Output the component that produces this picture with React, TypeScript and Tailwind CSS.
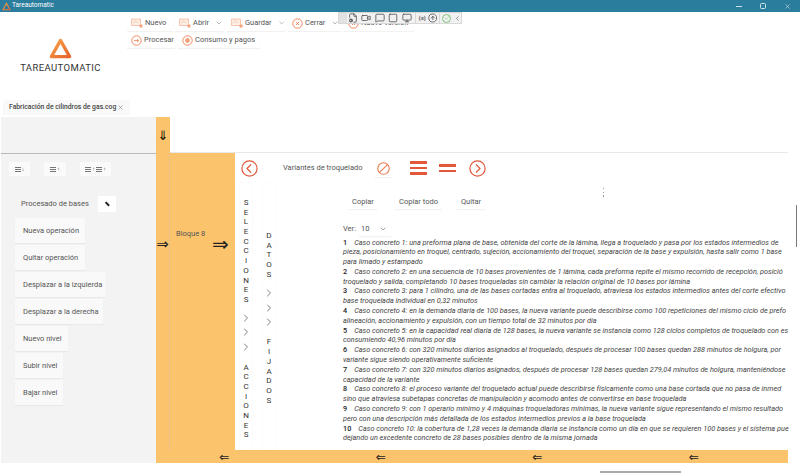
import { ChevronDown, ChevronRight, X, Check, FileCog, Video, MessageSquare, Square, Monitor, CircleArrowUp } from "lucide-react";

const cases: [string, string[]][] = [
  ["1", [
    "Caso concreto 1: una preforma plana de base, obtenida del corte de la lámina, llega a troquelado y pasa por los estados intermedios de",
    "pieza, posicionamiento en troquel, centrado, sujeción, accionamiento del troquel, separación de la base y expulsión, hasta salir como 1 base",
    "para limado y estampado",
  ]],
  ["2", [
    "Caso concreto 2: en una secuencia de 10 bases provenientes de 1 lámina, cada preforma repite el mismo recorrido de recepción, posició",
    "troquelado y salida, completando 10 bases troqueladas sin cambiar la relación original de 10 bases por lámina",
  ]],
  ["3", [
    "Caso concreto 3: para 1 cilindro, una de las bases cortadas entra al troquelado, atraviesa los estados intermedios antes del corte efectivo",
    "base troquelada individual en 0,32 minutos",
  ]],
  ["4", [
    "Caso concreto 4: en la demanda diaria de 100 bases, la nueva variante puede describirse como 100 repeticiones del mismo ciclo de prefo",
    "alineación, accionamiento y expulsión, con un tiempo total de 32 minutos por día",
  ]],
  ["5", [
    "Caso concreto 5: en la capacidad real diaria de 128 bases, la nueva variante se instancia como 128 ciclos completos de troquelado con es",
    "consumiendo 40,96 minutos por día",
  ]],
  ["6", [
    "Caso concreto 6: con 320 minutos diarios asignados al troquelado, después de procesar 100 bases quedan 288 minutos de holgura, por",
    "variante sigue siendo operativamente suficiente",
  ]],
  ["7", [
    "Caso concreto 7: con 320 minutos diarios asignados, después de procesar 128 bases quedan 279,04 minutos de holgura, manteniéndose",
    "capacidad de la variante",
  ]],
  ["8", [
    "Caso concreto 8: el proceso variante del troquelado actual puede describirse físicamente como una base cortada que no pasa de inmed",
    "sino que atraviesa subetapas concretas de manipulación y acomodo antes de convertirse en base troquelada",
  ]],
  ["9", [
    "Caso concreto 9: con 1 operario mínimo y 4 máquinas troqueladoras mínimas, la nueva variante sigue representando el mismo resultado",
    "pero con una descripción más detallada de los estados intermedios previos a la base troquelada",
  ]],
  ["10", [
    "Caso concreto 10: la cobertura de 1,28 veces la demanda diaria se instancia como un día en que se requieren 100 bases y el sistema pue",
    "dejando un excedente concreto de 28 bases posibles dentro de la misma jornada",
  ]],
];

function Logo({ size, stroke }: { size: number; stroke: number }) {
  return (
    <svg width={size} height={size} viewBox="0 0 24 24" fill="none">
      <defs>
        <linearGradient id="logoGrad" x1="0" y1="0" x2="1" y2="1">
          <stop offset="0" stopColor="#f7a348" />
          <stop offset="1" stopColor="#e8642c" />
        </linearGradient>
      </defs>
      <path d="M12 3.5 L21.5 20.5 L2.5 20.5 Z" stroke="url(#logoGrad)" strokeWidth={stroke} strokeLinejoin="round" />
    </svg>
  );
}

function FileIcon() {
  return (
    <svg width="12" height="10" viewBox="0 0 12 10" fill="none" className="shrink-0">
      <path d="M0.5 1h9v6.5h-9z" fill="#fdeee5" stroke="#f6b89c" strokeWidth="0.8" />
      <path d="M2 5l2.4-2 2.4 2" stroke="#f6b89c" strokeWidth="0.7" />
      <circle cx="10" cy="8" r="1.7" fill="#f5a482" />
    </svg>
  );
}

function RingIcon({ glyph }: { glyph: "close" | "go" | "coin" }) {
  return (
    <svg width="11" height="11" viewBox="0 0 11 11" fill="none" className="shrink-0">
      <circle cx="5.5" cy="5.5" r="4.7" stroke="#ee7d50" strokeWidth="0.9" />
      {glyph === "close" && <path d="M3.9 3.9l3.2 3.2M7.1 3.9L3.9 7.1" stroke="#ee7d50" strokeWidth="0.9" />}
      {glyph === "go" && <path d="M3 5.5h4.6M5.9 3.9l1.7 1.6-1.7 1.6" stroke="#ee7d50" strokeWidth="0.8" />}
      {glyph === "coin" && <circle cx="5.5" cy="5.5" r="2.4" fill="#f4a27e" />}
    </svg>
  );
}

function RibbonButton({ icon, label, caret, width }: { icon: React.ReactNode; label: string; caret?: boolean; width: string }) {
  return (
    <div className={`${width} h-[16px] flex items-center gap-[2px] pl-1 bg-white shadow-[0_1px_1px_rgba(0,0,0,0.05)] shrink-0`}>
      {icon}
      <span className="text-[7.5px] text-[#555] whitespace-nowrap">{label}</span>
      {caret && <ChevronDown size={8} strokeWidth={1.6} className="ml-[4px] text-[#777]" />}
    </div>
  );
}

function SideButton({ label, width }: { label: string; width: string }) {
  return (
    <div className={`${width} h-[25px] flex items-center pl-2 bg-[#f9f9f9] shadow-[0_1px_1px_rgba(0,0,0,0.04)] text-[7.5px] text-[#555] whitespace-nowrap`}>
      {label}
    </div>
  );
}

function SortIcon({ arrow, double }: { arrow: string; double?: boolean }) {
  const Lines = () => (
    <span className="flex flex-col gap-[1.2px] w-[6px]">
      <span className="h-[0.8px] bg-[#777]" />
      <span className="h-[0.8px] bg-[#777]" />
      <span className="h-[0.8px] bg-[#777]" />
    </span>
  );
  return (
    <span className="flex items-center gap-[1px] text-[6px] text-[#666] leading-none">
      <Lines />
      {double ? <span>↑</span> : null}
      {double ? <Lines /> : null}
      <span>{arrow}</span>
    </span>
  );
}

function VerticalWord({ word }: { word: string }) {
  return (
    <div className="flex flex-col items-center">
      {word.split("").map((c, i) => (
        <span key={i} className="h-[9.7px] leading-[9.7px] text-[8px] text-[#333]">{c}</span>
      ))}
    </div>
  );
}

function Chevrons({ gap }: { gap: string }) {
  return (
    <div className={`flex flex-col items-center ${gap}`}>
      <ChevronRight size={12} strokeWidth={1.5} className="text-[#555]" />
      <ChevronRight size={12} strokeWidth={1.5} className="text-[#555]" />
      <ChevronRight size={12} strokeWidth={1.5} className="text-[#555]" />
    </div>
  );
}

function CircleNav({ dir }: { dir: "left" | "right" }) {
  return (
    <svg width="17" height="17" viewBox="0 0 17 17" fill="none" className="shrink-0">
      <circle cx="8.5" cy="8.5" r="7.6" stroke="#e2583a" strokeWidth="1.2" />
      <path d={dir === "left" ? "M10 4.5L6 8.5l4 4" : "M7 4.5l4 4-4 4"} stroke="#e2583a" strokeWidth="1.2" />
    </svg>
  );
}

function FloatingTools() {
  return (
    <div className="absolute left-[338px] top-[12px] w-[124px] h-[12px] flex items-center bg-[#f1f1f1] border border-[#d8d8d8] text-[#444]">
      <span className="w-[8px] h-full bg-[#e2e2e2]" />
      <div className="flex items-center gap-[3.5px] pl-[1px]">
        <FileCog size={10} strokeWidth={1.8} />
        <Video size={10} strokeWidth={1.8} />
        <MessageSquare size={10} strokeWidth={1.8} />
        <Square size={10} strokeWidth={1.8} />
        <Monitor size={10} strokeWidth={1.8} />
      </div>
      <span className="ml-[3px] w-px h-full bg-[#d8d8d8]" />
      <span className="ml-[3px] text-[5.5px] font-bold">(≡)</span>
      <CircleArrowUp size={10} strokeWidth={1.8} className="ml-[2px]" />
      <span className="ml-[2px] w-px h-full bg-[#d8d8d8]" />
      <span className="ml-[2px] flex items-center justify-center w-[9px] h-[9px] rounded-full border border-[#7cc47c] text-[#5cb85c]">
        <Check size={6} strokeWidth={2} />
      </span>
      <ChevronRight size={7} strokeWidth={2} className="ml-[3px] rotate-180" />
    </div>
  );
}

export default function App() {
  return (
    <div className="relative w-[800px] h-[475px] overflow-hidden bg-white flex flex-col [font-family:Roboto,sans-serif]">
      <div className="h-[12px] flex items-center bg-[#2b7d9e] pl-[2px] shrink-0">
        <Logo size={9} stroke={3} />
        <span className="ml-[1px] text-[6.5px] text-white">Tareautomatic</span>
        <div className="ml-auto flex items-center gap-[18px] pr-[9px] text-white">
          <span className="w-[6px] h-[1px] bg-[#cfe3ea]" />
          <span className="w-[6px] h-[6px] rounded-[1.5px] border border-[#cfe3ea]" />
          <X size={7} strokeWidth={1.6} />
        </div>
      </div>

      <div className="h-[88px] flex shrink-0">
        <div className="w-[127px] flex flex-col items-center pt-[25px] shrink-0">
          <div className="-ml-[6px] flex flex-col items-center">
            <Logo size={23} stroke={3.4} />
            <span className="mt-[1px] text-[9.5px] tracking-[0.4px] text-[#333] whitespace-nowrap">TAREAUTOMATIC</span>
          </div>
        </div>
        <div className="flex flex-col gap-px pt-[3px]">
          <div className="flex gap-[3px]">
            <RibbonButton width="w-[45px]" icon={<FileIcon />} label="Nuevo" />
            <RibbonButton width="w-[49px]" icon={<FileIcon />} label="Abrir" caret />
            <RibbonButton width="w-[58px]" icon={<FileIcon />} label="Guardar" caret />
            <RibbonButton width="w-[53px]" icon={<RingIcon glyph="close" />} label="Cerrar" caret />
            <RibbonButton width="w-[70px]" icon={<RingIcon glyph="close" />} label="Nuevo versión" />
          </div>
          <div className="flex gap-[3px]">
            <RibbonButton width="w-[48px]" icon={<RingIcon glyph="go" />} label="Procesar" />
            <RibbonButton width="w-[82px]" icon={<RingIcon glyph="coin" />} label="Consumo y pagos" />
          </div>
        </div>
      </div>

      <div className="h-[17px] flex items-start pl-[3px] shrink-0">
        <div className="w-[127px] h-[15px] flex items-center pl-[6px] bg-[#f9f9f9] rounded-t-sm">
          <span className="text-[6.8px] font-medium text-[#444] whitespace-nowrap">Fabricación de cilindros de gas.cog</span>
          <X size={7} strokeWidth={1.6} className="ml-auto mr-[6px] text-[#666]" />
        </div>
      </div>

      <div className="h-[346px] flex shrink-0">
        <div className="w-[156px] flex flex-col bg-[#f3f3f3] shrink-0 ml-px">
          <div className="h-[37px] border-b border-[#b9b9b9] shrink-0" />
          <div className="flex gap-[14px] pl-[8px] pt-[8px]">
            <div className="w-[21px] h-[14px] flex items-center justify-center bg-[#fafafa]"><SortIcon arrow="↓" /></div>
            <div className="w-[22px] h-[14px] flex items-center justify-center bg-[#fafafa]"><SortIcon arrow="↑" /></div>
            <div className="w-[31px] h-[14px] flex items-center justify-center bg-[#fafafa]"><SortIcon arrow="↑" double /></div>
          </div>
          <div className="flex items-center mt-[20px] pl-[20px]">
            <span className="w-[77px] text-[7.5px] text-[#555] whitespace-nowrap">Procesado de bases</span>
            <div className="w-[18px] h-[16px] flex items-center justify-center bg-white">
              <span className="w-[5px] h-[1.5px] bg-[#222] rotate-45" />
            </div>
          </div>
          <div className="flex flex-col gap-[2px] pl-[14px] pt-[6px]">
            <SideButton width="w-[70px]" label="Nueva operación" />
            <SideButton width="w-[70px]" label="Quitar operación" />
            <SideButton width="w-[91px]" label="Desplazar a la izquierda" />
            <SideButton width="w-[88px]" label="Desplazar a la derecha" />
            <SideButton width="w-[53px]" label="Nuevo nivel" />
            <SideButton width="w-[48px]" label="Subir nivel" />
            <SideButton width="w-[48px]" label="Bajar nivel" />
          </div>
        </div>

        <div className="w-[632px] flex flex-col shrink-0 -ml-px">
          <div className="h-[36px] flex shrink-0">
            <div className="w-[14px] bg-[#fcc36d] flex items-center justify-center text-[13px] leading-none text-black font-['DejaVu_Sans',sans-serif]">⇓</div>
            <div className="flex-1 border-b border-[#e8e8e8]" />
          </div>
          <div className="h-[297px] flex shrink-0">
            <div className="w-[14px] bg-[#fcc36d] border-r border-[#ecc08a] pt-[81px] text-[15px] h-full leading-[20px] text-[#222] font-['DejaVu_Sans',sans-serif]">
              <span className="block text-center">⇒</span>
            </div>
            <div className="w-[65px] bg-[#fcc36d] flex flex-col relative pt-[75px]">
              <span className="pl-[6px] text-[7.5px] text-[#555] whitespace-nowrap">Bloque 8</span>
              <span className="absolute left-[42px] top-[81px] text-[20px] leading-none text-[#222] font-['DejaVu_Sans',sans-serif]">⇒</span>
            </div>
            <div className="flex-1 flex flex-col min-w-0 bg-white relative">
              <div className="h-[30px] flex items-center pl-[6px] shrink-0">
                <CircleNav dir="left" />
                <span className="ml-[25px] w-[77px] text-[7.5px] text-[#555] whitespace-nowrap">Variantes de troquelado</span>
                <span className="ml-[15px] w-[17px] h-[17px] flex items-center justify-center shadow-[0_1px_1px_rgba(0,0,0,0.05)]">
                  <svg width="13" height="13" viewBox="0 0 13 13" fill="none">
                    <circle cx="6.5" cy="6.5" r="5.7" stroke="#ee7d50" strokeWidth="1.1" />
                    <path d="M2.8 10.2L10.2 2.8" stroke="#ee7d50" strokeWidth="1.1" />
                  </svg>
                </span>
                <span className="ml-[18px] w-[17px] flex flex-col gap-[3px]">
                  <span className="h-[2.5px] bg-[#e2583a]" />
                  <span className="h-[2.5px] bg-[#e2583a]" />
                  <span className="h-[2.5px] bg-[#e2583a]" />
                </span>
                <span className="ml-[12px] w-[17px] flex flex-col gap-[3px]">
                  <span className="h-[2.5px] bg-[#e2583a]" />
                  <span className="h-[2.5px] bg-[#e2583a]" />
                </span>
                <span className="ml-[13px]"><CircleNav dir="right" /></span>
              </div>

              <div className="flex-1 flex min-h-0">
                <div className="w-[12px] ml-[5px] flex flex-col items-center pt-[15px] shadow-[0_0_1px_rgba(0,0,0,0.1)] shrink-0">
                  <VerticalWord word="SELECCIONES" />
                  <div className="mt-[7px]"><Chevrons gap="gap-[2.5px]" /></div>
                  <div className="mt-[10px]"><VerticalWord word="ACCIONES" /></div>
                </div>
                <div className="w-[12px] ml-[11px] flex flex-col items-center pt-[48px] shadow-[0_0_1px_rgba(0,0,0,0.1)] shrink-0">
                  <VerticalWord word="DATOS" />
                  <div className="mt-[8px]"><Chevrons gap="gap-[2.5px]" /></div>
                  <div className="mt-[9px]"><VerticalWord word="FIJADOS" /></div>
                </div>
                <div className="w-[445px] ml-[68px] flex flex-col min-w-0 shrink-0">
                  <div className="flex items-center h-[14px] mt-[12px] pl-[6px] text-[7.5px] text-[#555]">
                    <span className="w-[28px] h-full flex items-center justify-center shadow-[0_1px_1px_rgba(0,0,0,0.05)]">Copiar</span>
                    <span className="ml-[18px] w-[47px] h-full flex items-center justify-center shadow-[0_1px_1px_rgba(0,0,0,0.05)]">Copiar todo</span>
                    <span className="ml-[15px] w-[28px] h-full flex items-center justify-center shadow-[0_1px_1px_rgba(0,0,0,0.05)]">Quitar</span>
                  </div>
                  <div className="flex items-center h-[14px] mt-[13px] text-[7.5px] text-[#555]">
                    <span>Ver:</span>
                    <span className="ml-[3px] w-[32px] flex items-center justify-between pr-[4px] pl-[2px] h-full shadow-[0_1px_1px_rgba(0,0,0,0.05)]">
                      10
                      <ChevronDown size={8} strokeWidth={1.6} />
                    </span>
                  </div>
                  <div className="mt-[1.5px]">
                    {cases.map(([num, lines]) => (
                      <div key={num}>
                        {lines.map((line, i) => (
                          <div key={i} className="h-[9.8px] leading-[9.8px] text-[7.3px] text-[#444] whitespace-nowrap">
                            {i === 0 && <span className="font-medium not-italic text-[#222] mr-[7px]">{num}</span>}
                            <span className="italic">{line}</span>
                          </div>
                        ))}
                      </div>
                    ))}
                  </div>
                </div>
              </div>
              <div className="absolute left-[368px] top-[35px] flex flex-col gap-[2.5px]">
                <span className="w-[1.2px] h-[1.2px] bg-[#999]" />
                <span className="w-[1.2px] h-[1.2px] bg-[#999]" />
                <span className="w-[1.2px] h-[1.2px] bg-[#999]" />
              </div>
            </div>
          </div>
          <div className="h-[13px] flex items-center gap-[140px] pl-[60px] bg-[#fcc36d] text-[12px] leading-none text-[#222] shrink-0 font-['DejaVu_Sans',sans-serif]">
            <span className="w-[16.5px] text-center">⇐</span>
            <span className="w-[16.5px] text-center">⇐</span>
            <span className="w-[16.5px] text-center">⇐</span>
            <span className="w-[16.5px] text-center">⇐</span>
          </div>
        </div>
      </div>

      <div className="absolute right-[3px] top-[205px] w-[1px] h-[42px] bg-[#777]" />
      <div className="absolute left-[600px] top-[471px] w-[81px] h-[1.5px] bg-[#aaa]" />
      <FloatingTools />
    </div>
  );
}
